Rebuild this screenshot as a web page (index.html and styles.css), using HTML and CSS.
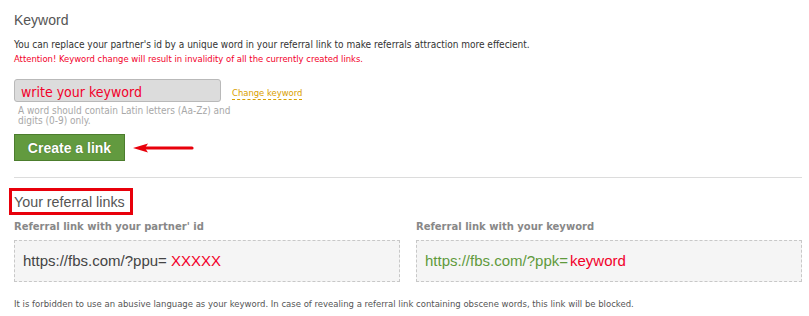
FILE: index.html
```html
<!DOCTYPE html>
<html>
<head>
<meta charset="utf-8">
<link rel="stylesheet" href="styles.css">
</head>
<body>
<div class="page">
  <section class="keyword">
    <h2 class="title">Keyword</h2>
    <p class="note">You can replace your partner's id by a unique word in your referral link to make referrals attraction more effecient.</p>
    <p class="note warn">Attention! Keyword change will result in invalidity of all the currently created links.</p>
    <div class="field-row">
      <div class="field">
        <div class="input">write your keyword</div>
        <div class="hint">A word should contain Latin letters (Aa-Zz) and digits (0-9) only.</div>
      </div>
      <a class="change">Change keyword</a>
    </div>
    <div class="action-row">
      <button class="btn">Create a link</button>
      <svg class="arrow" width="62" height="12" viewBox="0 0 62 12">
        <path d="M12 6 H59" stroke="#e8000b" stroke-width="3.2" stroke-linecap="round"/>
        <path d="M0 6 L15 1.5 L12 6 L15 10.5 Z" fill="#e8000b"/>
      </svg>
    </div>
  </section>
  <hr class="sep">
  <section class="links">
    <h2 class="title boxed">Your referral links</h2>
    <div class="cols">
      <div class="col">
        <div class="label">Referral link with your partner' id</div>
        <div class="linkbox">https://fbs.com/?ppu= <span class="red">XXXXX</span></div>
      </div>
      <div class="col">
        <div class="label">Referral link with your keyword</div>
        <div class="linkbox green">https://fbs.com/?ppk=<span class="red kw">keyword</span></div>
      </div>
    </div>
    <p class="footer">It is forbidden to use an abusive language as your keyword. In case of revealing a referral link containing obscene words, this link will be blocked.</p>
  </section>
</div>
</body>
</html>
```
FILE: styles.css
```css
html, body {
  margin: 0;
  padding: 0;
  background: #ffffff;
}
.page {
  width: 788px;
  padding: 10px 7px 0 14px;
  font-family: "DejaVu Sans Condensed", "DejaVu Sans", sans-serif;
  color: #444;
}
.title {
  margin: 0;
  font-family: "Liberation Sans", Arial, sans-serif;
  font-weight: normal;
  font-size: 14px;
  line-height: 20px;
  color: #555;
}
.note {
  margin: 0;
  font-size: 10px;
  line-height: 14px;
  color: #333;
}
.keyword .title { margin-bottom: 8px; }
.warn {
  color: #f2002a;
  font-size: 9.4px;
  line-height: 13px;
}
.field-row {
  display: flex;
  align-items: flex-start;
  gap: 11px;
  margin-top: 14px;
}
.field { width: 207px; }
.input {
  box-sizing: border-box;
  height: 23px;
  border: 1px solid #b9b9b9;
  border-radius: 3px;
  background: #dcdcdc;
  color: #f2002a;
  font-size: 14px;
  line-height: 24px;
  padding-left: 6px;
}
.hint {
  margin-top: 4px;
  margin-right: -14px;
  padding-left: 4px;
  font-size: 10px;
  line-height: 10px;
  color: #a8a8a8;
}
.change {
  margin-top: 8px;
  font-size: 9.4px;
  line-height: 12px;
  color: #d9a000;
  border-bottom: 1px dashed #d9a000;
}
.action-row {
  display: flex;
  align-items: center;
  gap: 8px;
  margin-top: 8px;
}
.btn {
  box-sizing: border-box;
  width: 111px;
  height: 27px;
  border: 1px solid #4c7d2d;
  background: #629a3f;
  color: #fff;
  font-family: "Liberation Sans", Arial, sans-serif;
  font-weight: bold;
  font-size: 14px;
  padding: 0;
  text-shadow: 0 0 1px #3a5f22;
}
.arrow { display: block; }
.sep {
  margin: 16px 0 0 0;
  border: 0;
  border-top: 1px solid #dcdcdc;
}
.links { padding-top: 10px; }
.boxed {
  display: inline-block;
  margin-left: -5px;
  padding: 1px 5px 0 2px;
  border: 3px solid #e8000b;
  line-height: 20px;
  font-size: 14.3px;
}
.cols {
  display: flex;
  gap: 16px;
  margin-top: 5px;
}
.col { flex: 1; }
.label {
  font-family: "DejaVu Sans", sans-serif;
  font-weight: bold;
  font-size: 10px;
  line-height: 14px;
  color: #888;
}
.linkbox {
  box-sizing: border-box;
  height: 42px;
  margin-top: 6px;
  border: 1px dashed #c8c8c8;
  background: #f5f5f5;
  font-family: "Liberation Sans", Arial, sans-serif;
  font-size: 15px;
  line-height: 40px;
  padding-left: 8px;
  color: #444;
}
.green { color: #5f9a3c; }
.red { color: #f2002a; }
.kw { margin-left: 2px; }
.footer {
  margin: 16px 0 0 0;
  font-size: 9.45px;
  line-height: 12px;
  color: #555;
}
```
